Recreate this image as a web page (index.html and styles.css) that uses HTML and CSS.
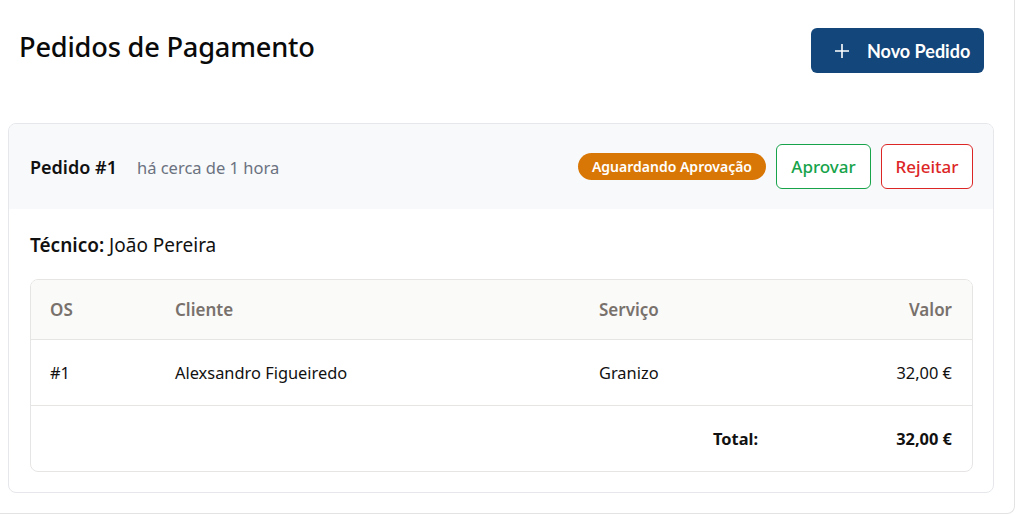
FILE: index.html
```html
<!DOCTYPE html>
<html lang="pt">
<head>
<meta charset="utf-8">
<link rel="stylesheet" href="styles.css">
</head>
<body>
<div class="page">
  <header class="top">
    <h1 class="title">Pedidos de Pagamento</h1>
    <button class="btn-new">
      <svg class="plus" width="16" height="16" viewBox="0 0 16 16"><path d="M8 1v14M1 8h14" stroke="#fff" stroke-width="1.6" fill="none"/></svg>
      <span>Novo Pedido</span>
    </button>
  </header>

  <section class="card">
    <div class="card-head">
      <div class="head-left">
        <span class="order">Pedido #1</span>
        <span class="time">há cerca de 1 hora</span>
      </div>
      <div class="head-right">
        <span class="badge">Aguardando Aprovação</span>
        <button class="btn-outline approve">Aprovar</button>
        <button class="btn-outline reject">Rejeitar</button>
      </div>
    </div>
    <div class="card-body">
      <p class="tech"><strong>Técnico:</strong> João Pereira</p>
      <div class="table-wrap">
        <table class="items">
          <colgroup>
            <col class="c1"><col class="c2"><col class="c3"><col class="c4">
          </colgroup>
          <thead>
            <tr><th>OS</th><th>Cliente</th><th>Serviço</th><th class="num">Valor</th></tr>
          </thead>
          <tbody>
            <tr><td>#1</td><td>Alexsandro Figueiredo</td><td>Granizo</td><td class="num">32,00 €</td></tr>
            <tr class="total"><td></td><td></td><td class="num">Total:</td><td class="num">32,00 €</td></tr>
          </tbody>
        </table>
      </div>
    </div>
  </section>
</div>
</body>
</html>
```

FILE: styles.css
```css
* { box-sizing: border-box; }
html, body { margin: 0; padding: 0; background: #fff; }
body { font-family: "Noto Sans", "Open Sans", sans-serif; color: #111; }

.page {
  width: 1015px;
  height: 514px;
  border-right: 1px solid #e3e3e3;
  border-bottom: 1px solid #e3e3e3;
  border-bottom-right-radius: 8px;
  overflow: hidden;
}

.top {
  display: flex;
  justify-content: space-between;
  align-items: center;
  padding: 28px 30px 0 19px;
  height: 73px;
  margin-bottom: 50px;
}
.title {
  margin: 0;
  font-size: 27.2px;
  font-weight: 500;
  letter-spacing: -0.2px;
  color: #0a0a0a;
  position: relative;
  top: -4px;
}
.btn-new {
  display: flex;
  align-items: center;
  height: 45px;
  width: 173px;
  padding: 0 0 0 23px;
  gap: 17px;
  background: #13467a;
  border: none;
  border-radius: 6px;
  color: #fff;
  font-family: Lato, sans-serif;
  font-weight: 700;
  font-size: 18px;
}
.plus { flex: none; }

.card {
  margin: 0 20px 0 8px;
  border: 1px solid #e5e7eb;
  border-radius: 8px;
  overflow: hidden;
}
.card-head {
  height: 85px;
  background: #f8f9fb;
  display: flex;
  align-items: center;
  justify-content: space-between;
  padding: 0 20px 0 21px;
}
.head-left { display: flex; align-items: baseline; gap: 20px; }
.order { font-size: 18px; font-weight: 600; color: #111; }
.time { font-size: 16.5px; color: #6b7280; }
.head-right { display: flex; align-items: center; gap: 10px; }
.badge {
  background: #d97706;
  color: #fff;
  font-size: 14px;
  font-weight: 600;
  height: 27px;
  line-height: 27px;
  padding: 0 14px;
  border-radius: 14px;
}
.btn-outline {
  height: 45px;
  background: #fff;
  border-radius: 6px;
  font-family: inherit;
  font-size: 17px;
  font-weight: 500;
  padding: 0 10px;
}
.approve { border: 1px solid #16a34a; color: #16a34a; width: 95px; }
.reject { border: 1px solid #dc2626; color: #dc2626; width: 92px; }

.card-body { padding: 24px 20px 20px 21px; }
.tech { margin: 0 0 22px; font-size: 19px; line-height: 24px; }
.tech strong { font-weight: 600; }

.table-wrap {
  border: 1px solid #e7e5e4;
  border-radius: 8px;
  overflow: hidden;
}
.items {
  width: 100%;
  border-collapse: collapse;
  table-layout: fixed;
  font-size: 16.4px;
}
.c1 { width: 125px; }
.c2 { width: 424px; }
.c3 { width: 198px; }
.items th, .items td {
  text-align: left;
  padding: 0 20px 0 19px;
  height: 66px;
}
.items th {
  height: 59px;
  background: #fafaf9;
  color: #78716c;
  font-weight: 600;
  font-size: 17px;
}
.items thead tr, .items tbody tr:first-child { border-bottom: 1px solid #e7e5e4; }
.items td { color: #111; }
.items .num { text-align: right; }
.total td { font-weight: 700; }
```
